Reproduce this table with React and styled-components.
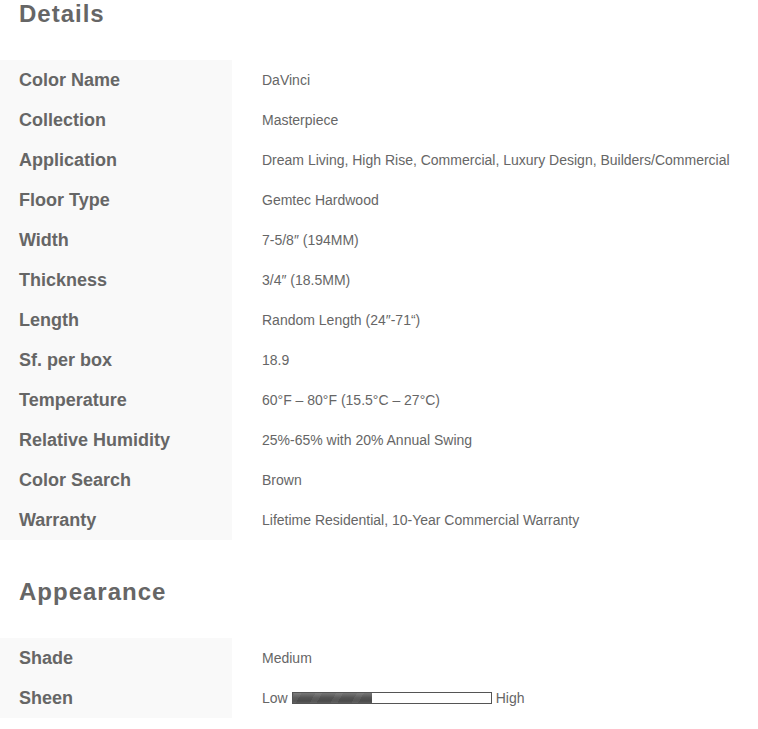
import React from 'react';
import styled, { createGlobalStyle } from 'styled-components';

const GlobalStyle = createGlobalStyle`
  body {
    margin: 0;
    background: #fff;
    font-family: "Liberation Sans", Arial, sans-serif;
    color: #666;
  }
`;

const Page = styled.div`
  width: 758px;
`;

const Heading = styled.h2`
  margin: ${props => (props.$first ? '0' : '38px')} 0 32px;
  padding-left: 19px;
  font-size: 24px;
  line-height: 28px;
  font-weight: 700;
  letter-spacing: 1px;
  color: #666;
`;

const Table = styled.div`
  display: grid;
  grid-template-columns: 232px 1fr;
`;

const Label = styled.div`
  background: #f9f9f9;
  height: 40px;
  display: flex;
  align-items: center;
  padding-left: 19px;
  font-size: 18px;
  font-weight: 700;
  color: #666;
`;

const Value = styled.div`
  height: 40px;
  display: flex;
  align-items: center;
  padding-left: 30px;
  font-size: 14px;
  color: #666;
  white-space: nowrap;
`;

const Scale = styled.span`
  display: inline-flex;
  align-items: center;
  gap: 4px;
`;

const Track = styled.span`
  display: block;
  width: 200px;
  height: 12px;
  box-sizing: border-box;
  border: 1px solid #555;
  background: #fff;
`;

const Fill = styled.span`
  display: block;
  height: 100%;
  background:
    repeating-linear-gradient(
      -60deg,
      rgba(255, 255, 255, 0) 0 12px,
      rgba(255, 255, 255, 0.06) 12px 18px
    ),
    linear-gradient(to bottom, #777, #555 45%, #4a4a4a 80%, #5a5a5a);
`;

const details = [
  ['Color Name', 'DaVinci'],
  ['Collection', 'Masterpiece'],
  ['Application', 'Dream Living, High Rise, Commercial, Luxury Design, Builders/Commercial'],
  ['Floor Type', 'Gemtec Hardwood'],
  ['Width', '7-5/8\u2033 (194MM)'],
  ['Thickness', '3/4\u2033 (18.5MM)'],
  ['Length', 'Random Length (24\u2033-71\u201C)'],
  ['Sf. per box', '18.9'],
  ['Temperature', '60°F \u2013 80°F (15.5°C \u2013 27°C)'],
  ['Relative Humidity', '25%-65% with 20% Annual Swing'],
  ['Color Search', 'Brown'],
  ['Warranty', 'Lifetime Residential, 10-Year Commercial Warranty'],
];

const App = () => {
  const sheen = 40;
  return (
    <Page>
      <GlobalStyle />
      <Heading $first>Details</Heading>
      <Table>
        {details.map(([k, v]) => (
          <React.Fragment key={k}>
            <Label>{k}</Label>
            <Value>{v}</Value>
          </React.Fragment>
        ))}
      </Table>

      <Heading>Appearance</Heading>
      <Table>
        <Label>Shade</Label>
        <Value>Medium</Value>
        <Label>Sheen</Label>
        <Value>
          <Scale>
            Low
            <Track>
              <Fill style={{ width: `${sheen}%` }} />
            </Track>
            High
          </Scale>
        </Value>
      </Table>
    </Page>
  );
};

export default App;
